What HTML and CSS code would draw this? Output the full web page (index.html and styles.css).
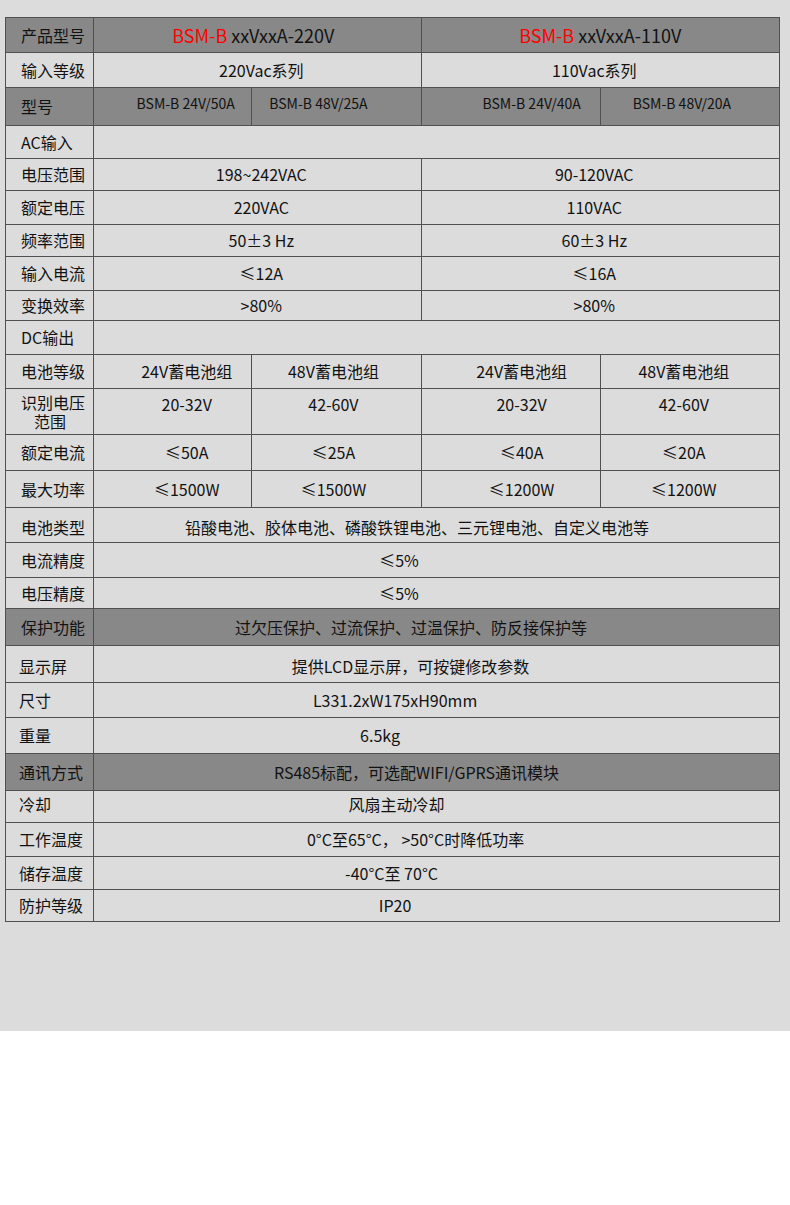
FILE: index.html
```html
<!DOCTYPE html>
<html lang="zh-CN">
<head>
<meta charset="utf-8">
<title>BSM-B 规格参数</title>
<link rel="stylesheet" href="styles.css">
</head>
<body>
<div class="sheet">
<table class="spec">
  <colgroup>
    <col class="col-label"><col class="col-a"><col class="col-b"><col class="col-c"><col class="col-d">
  </colgroup>
  <tr class="dark r-title">
    <td class="label">产品型号</td>
    <td colspan="2" class="title title-l"><span class="red">BSM-B</span> xxVxxA-220V</td>
    <td colspan="2" class="title"><span class="red">BSM-B</span> xxVxxA-110V</td>
  </tr>
  <tr class="r35">
    <td class="label">输入等级</td>
    <td colspan="2" class="half-l">220Vac系列</td>
    <td colspan="2" class="half-r">110Vac系列</td>
  </tr>
  <tr class="dark r-model">
    <td class="label">型号</td>
    <td class="c2">BSM-B 24V/50A</td>
    <td class="c3">BSM-B 48V/25A</td>
    <td class="c4">BSM-B 24V/40A</td>
    <td class="c5">BSM-B 48V/20A</td>
  </tr>
  <tr class="r33">
    <td class="label">AC输入</td>
    <td colspan="4"></td>
  </tr>
  <tr class="r32">
    <td class="label">电压范围</td>
    <td colspan="2" class="half-l">198~242VAC</td>
    <td colspan="2" class="half-r">90-120VAC</td>
  </tr>
  <tr class="r34">
    <td class="label">额定电压</td>
    <td colspan="2" class="half-l">220VAC</td>
    <td colspan="2" class="half-r">110VAC</td>
  </tr>
  <tr class="r32">
    <td class="label">频率范围</td>
    <td colspan="2" class="half-l">50±3 Hz</td>
    <td colspan="2" class="half-r">60±3 Hz</td>
  </tr>
  <tr class="r34">
    <td class="label">输入电流</td>
    <td colspan="2" class="half-l">≤12A</td>
    <td colspan="2" class="half-r">≤16A</td>
  </tr>
  <tr class="r30">
    <td class="label">变换效率</td>
    <td colspan="2" class="half-l">&gt;80%</td>
    <td colspan="2" class="half-r">&gt;80%</td>
  </tr>
  <tr class="r34">
    <td class="label">DC输出</td>
    <td colspan="4"></td>
  </tr>
  <tr class="r34">
    <td class="label">电池等级</td>
    <td class="c2">24V蓄电池组</td>
    <td class="c3">48V蓄电池组</td>
    <td class="c4">24V蓄电池组</td>
    <td class="c5">48V蓄电池组</td>
  </tr>
  <tr class="r-range">
    <td class="label two-line"><div>识别电压</div><div class="indent">范围</div></td>
    <td class="c2">20-32V</td>
    <td class="c3">42-60V</td>
    <td class="c4">20-32V</td>
    <td class="c5">42-60V</td>
  </tr>
  <tr class="r36">
    <td class="label">额定电流</td>
    <td class="c2">≤50A</td>
    <td class="c3">≤25A</td>
    <td class="c4">≤40A</td>
    <td class="c5">≤20A</td>
  </tr>
  <tr class="r37">
    <td class="label">最大功率</td>
    <td class="c2">≤1500W</td>
    <td class="c3">≤1500W</td>
    <td class="c4">≤1200W</td>
    <td class="c5">≤1200W</td>
  </tr>
  <tr class="r35 low">
    <td class="label">电池类型</td>
    <td colspan="4" class="wide shift-39">铅酸电池、胶体电池、磷酸铁锂电池、三元锂电池、自定义电池等</td>
  </tr>
  <tr class="r35">
    <td class="label">电流精度</td>
    <td colspan="4" class="wide shift-75">≤5%</td>
  </tr>
  <tr class="r31">
    <td class="label">电压精度</td>
    <td colspan="4" class="wide shift-75">≤5%</td>
  </tr>
  <tr class="dark r37">
    <td class="label">保护功能</td>
    <td colspan="4" class="wide shift-51">过欠压保护、过流保护、过温保护、防反接保护等</td>
  </tr>
  <tr class="r37 low tight">
    <td class="label">显示屏</td>
    <td colspan="4" class="wide shift-52">提供LCD显示屏，可按键修改参数</td>
  </tr>
  <tr class="r35 tight">
    <td class="label">尺寸</td>
    <td colspan="4" class="wide shift-83">L331.2xW175xH90mm</td>
  </tr>
  <tr class="r36 tight">
    <td class="label">重量</td>
    <td colspan="4" class="wide shift-113">6.5kg</td>
  </tr>
  <tr class="dark r37 tight">
    <td class="label">通讯方式</td>
    <td colspan="4" class="wide shift-40">RS485标配，可选配WIFI/GPRS通讯模块</td>
  </tr>
  <tr class="r32 high tight">
    <td class="label">冷却</td>
    <td colspan="4" class="wide shift-80">风扇主动冷却</td>
  </tr>
  <tr class="r34 tight">
    <td class="label">工作温度</td>
    <td colspan="4" class="wide shift-42">0°C至65°C， &gt;50°C时降低功率</td>
  </tr>
  <tr class="r33 tight">
    <td class="label">储存温度</td>
    <td colspan="4" class="wide shift-90">-40°C至 70°C</td>
  </tr>
  <tr class="r32 tight">
    <td class="label">防护等级</td>
    <td colspan="4" class="wide shift-83">IP20</td>
  </tr>
</table>
</div>
</body>
</html>
```

FILE: styles.css
```css
html, body {
  margin: 0;
  padding: 0;
  background: #ffffff;
}

.sheet {
  background: #dcdcdc;
  height: 1031px;
  box-sizing: border-box;
  padding: 17px 0 0 5px;
  font-family: "Noto Sans CJK SC", "Noto Sans", sans-serif;
  color: #121212;
}

.spec {
  border-collapse: collapse;
  table-layout: fixed;
  width: 775px;
  font-size: 16px;
  line-height: 19px;
}

.col-label { width: 88px; }
.col-a { width: 158px; }
.col-b { width: 169px; }
.col-c { width: 179px; }
.col-d { width: 179px; }

.spec td {
  border: 1px solid #505050;
  padding: 0;
  text-align: center;
  vertical-align: middle;
  white-space: nowrap;
}

.spec td.label {
  text-align: left;
  padding-left: 15px;
}

.spec tr.tight td.label {
  padding-left: 13px;
}

.dark td { background: #888888; }

.title {
  font-size: 18px;
}
.spec td.title-l { padding-right: 8px; }
.red { color: #ff0000; }

.r-title { height: 35px; }
.r-model { height: 38px; }
.r-range { height: 46px; }
.r30 { height: 30px; }
.r31 { height: 31px; }
.r32 { height: 32px; }
.r33 { height: 33px; }
.r34 { height: 34px; }
.r35 { height: 35px; }
.r36 { height: 36px; }
.r37 { height: 37px; }

/* two-column halves */
.spec td.half-l { padding-left: 8px; }
.spec td.half-r { padding-right: 12px; }

/* four-column cells */
.spec td.c2 { padding-left: 28px; }
.spec td.c3 { padding-right: 6px; }
.spec td.c4 { padding-left: 22px; }
.spec td.c5 { padding-right: 12px; }

.r-model td.c2, .r-model td.c3, .r-model td.c4, .r-model td.c5 {
  font-size: 14px;
  padding-bottom: 6px;
}
.spec .r-model td.c2 { padding-left: 26px; }
.spec .r-model td.c3 { padding-right: 36px; }
.spec .r-model td.c4 { padding-left: 42px; }
.spec .r-model td.c5 { padding-right: 16px; }

.r-range td { vertical-align: top; padding-top: 6px; }
.spec .r-range td.two-line { padding-top: 4px; line-height: 19px; }
.indent { padding-left: 13px; }

/* vertical nudges */
.low td { padding-top: 5px; }
.high td { padding-bottom: 4px; }

/* merged row centring offsets */
.spec td.shift-39 { padding-right: 39px; }
.spec td.shift-40 { padding-right: 40px; }
.spec td.shift-42 { padding-right: 42px; }
.spec td.shift-51 { padding-right: 51px; }
.spec td.shift-52 { padding-right: 52px; }
.spec td.shift-75 { padding-right: 75px; }
.spec td.shift-80 { padding-right: 80px; }
.spec td.shift-83 { padding-right: 83px; }
.spec td.shift-90 { padding-right: 90px; }
.spec td.shift-113 { padding-right: 113px; }
```
